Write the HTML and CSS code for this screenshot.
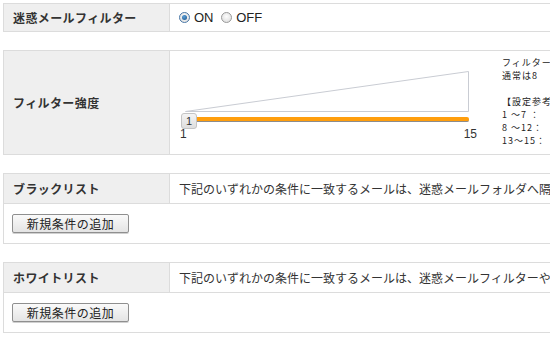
FILE: index.html
```html
<!DOCTYPE html>
<html lang="ja">
<head>
<meta charset="utf-8">
<link rel="stylesheet" href="styles.css">
</head>
<body>
<div class="page">
  <table class="tbl t1">
    <tr>
      <th class="label">迷惑メールフィルター</th>
      <td class="value">
        <label class="radio"><span class="dot on"></span>ON</label>
        <label class="radio"><span class="dot"></span>OFF</label>
      </td>
    </tr>
  </table>

  <table class="tbl t2">
    <tr>
      <th class="label">フィルター強度</th>
      <td class="value slider-cell">
        <div class="slider-wrap">
          <div class="slider">
            <svg class="ramp" width="290" height="44" viewBox="0 0 290 44">
              <polyline points="5.5,41.5 288.5,41.5 288.5,1.5 5.5,41.5" fill="none" stroke="#c9ccd3" stroke-width="1"/>
            </svg>
            <div class="track"></div>
            <div class="handle">1</div>
            <div class="scale"><span>1</span><span>15</span></div>
          </div>
          <div class="note">
            <div class="ln">フィルター</div>
            <div class="ln">通常は8</div>
            <div class="ln gap">【設定参考</div>
            <div class="ln">1 〜7 ：</div>
            <div class="ln">8 〜12：</div>
            <div class="ln">13〜15：</div>
          </div>
        </div>
      </td>
    </tr>
  </table>

  <table class="tbl t3">
    <tr>
      <th class="label">ブラックリスト</th>
      <td class="value desc">下記のいずれかの条件に一致するメールは、迷惑メールフォルダへ隔離さ</td>
    </tr>
    <tr>
      <td class="btn-row" colspan="2"><button class="btn">新規条件の追加</button></td>
    </tr>
  </table>

  <table class="tbl t4">
    <tr>
      <th class="label">ホワイトリスト</th>
      <td class="value desc">下記のいずれかの条件に一致するメールは、迷惑メールフィルターやブラ</td>
    </tr>
    <tr>
      <td class="btn-row" colspan="2"><button class="btn">新規条件の追加</button></td>
    </tr>
  </table>
</div>
</body>
</html>
```

FILE: styles.css
```css
html, body {
  margin: 0;
  padding: 0;
  background: #fff;
  overflow: hidden;
}
body {
  font-family: "Noto Sans CJK JP", "Liberation Sans", sans-serif;
  font-size: 12px;
  color: #333;
}
.page {
  padding: 3px 0 0 3px;
  width: 700px;
}
.tbl {
  border-collapse: collapse;
  width: 680px;
  table-layout: fixed;
}
.tbl + .tbl {
  margin-top: 18px;
}
.label {
  width: 166px;
  background: #efefef;
  border: 1px solid #dcdcdc;
  text-align: left;
  font-weight: bold;
  font-size: 12px;
  padding: 0 0 0 9px;
  box-sizing: border-box;
  letter-spacing: 0.4px;
  color: #333;
  white-space: nowrap;
}
.value {
  border: 1px solid #dcdcdc;
  padding: 0 0 0 9px;
  white-space: nowrap;
  overflow: hidden;
}
.t1 tr { height: 28px; }
.t1 .value { font-family: "Liberation Sans", sans-serif; font-size: 13px; color: #222; }
.radio {
  display: inline-flex;
  align-items: center;
  margin-right: 4px;
}
.dot {
  width: 11px;
  height: 11px;
  border-radius: 50%;
  border: 1px solid #9a9a9a;
  background: radial-gradient(circle at 50% 40%, #fdfdfd, #d8d8d8);
  margin-right: 4px;
  position: relative;
  box-sizing: border-box;
}
.dot.on {
  border-color: #4b79a8;
}
.dot.on::after {
  content: "";
  position: absolute;
  left: 2px;
  top: 2px;
  width: 5px;
  height: 5px;
  border-radius: 50%;
  background: radial-gradient(circle at 40% 35%, #5aa0d8, #1a4f86);
}
.t2 tr { height: 104px; }
.slider-cell {
  padding: 0;
  vertical-align: top;
}
.slider-wrap {
  display: flex;
}
.slider {
  position: relative;
  width: 325px;
  height: 102px;
  flex: none;
}
.ramp {
  position: absolute;
  left: 10px;
  top: 19px;
}
.track {
  position: absolute;
  left: 18px;
  top: 66px;
  width: 281px;
  height: 4px;
  background: #ff9e0d;
  border-bottom: 1px solid #8c8c8c;
  border-radius: 0 2px 2px 0;
}
.handle {
  position: absolute;
  left: 11px;
  top: 62px;
  width: 14px;
  height: 14px;
  border: 1px solid #c4c4c4;
  border-radius: 3px;
  background: linear-gradient(#f4f4f4, #dedede);
  font-family: "Liberation Sans", sans-serif;
  font-size: 11px;
  line-height: 14px;
  text-align: center;
  color: #333;
}
.scale {
  position: absolute;
  left: 10px;
  top: 76px;
  width: 297px;
  display: flex;
  justify-content: space-between;
  font-family: "Liberation Sans", sans-serif;
  font-size: 12px;
  color: #333;
}
.note {
  padding: 5px 0 0 7px;
  font-size: 9px;
  letter-spacing: 1px;
  color: #222;
  white-space: nowrap;
}
.ln {
  line-height: 13px;
  height: 13px;
}
.ln.gap {
  margin-top: 13px;
}
.t3 .label, .t4 .label { height: 30px; }
.desc { color: #333; font-size: 12px; }
.btn-row {
  border: 1px solid #dcdcdc;
  height: 39px;
  padding: 0 0 0 8px;
}
.btn {
  font-family: "Noto Sans CJK JP", sans-serif;
  font-size: 12px;
  height: 19px;
  width: 117px;
  padding: 0;
  line-height: 17px;
  border: 1px solid #8f8f8f;
  border-radius: 2px;
  background: linear-gradient(#fafafa, #e4e4e4);
  color: #222;
  letter-spacing: 0.5px;
  box-shadow: 0 1px 0 #d0d0d0;
  display: block;
}
```
